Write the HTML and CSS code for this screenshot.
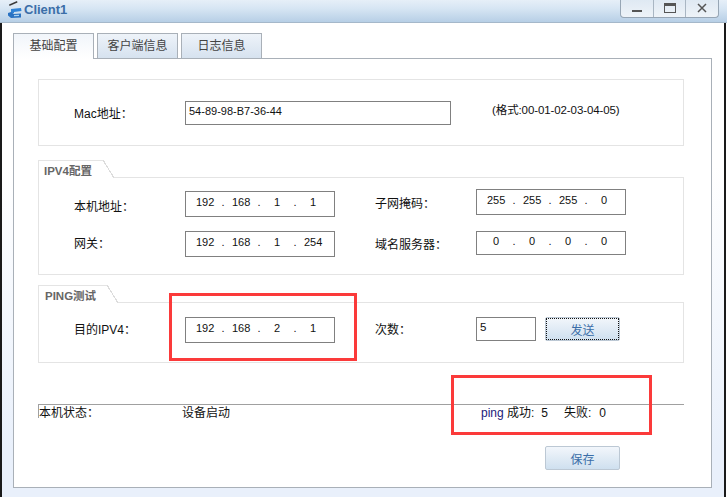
FILE: index.html
```html
<!DOCTYPE html>
<html>

<head>
  <meta charset="utf-8">
  <title>Client1</title>
  <link rel="stylesheet" href="styles.css">
</head>

<body>
  <div class="window">
    <div class="titlebar">
      <svg class="app-icon" width="16" height="19" viewBox="0 0 16 19">
        <path d="M3 4.5 L11 1 L11.5 2.5 L3.5 6 Z" fill="#3a3a3a" />
        <path d="M5 9 L15 8 L15.5 11 L8 12 L8 13 L5 13 Z" fill="#2f82d6" />
        <path d="M2 13 L5 12 L8 14 L15 13.5 L15 17.5 L5 18 L2 15.5 Z" fill="#2a72c2" />
        <path d="M8 15 L13 14.8 L13 16 L8 16.2 Z" fill="#a9d2f2" />
      </svg>
      <span class="title">Client1</span>
      <div class="controls">
        <div class="ctrl"><svg width="12" height="10" viewBox="0 0 12 10"><rect x="1" y="7" width="10" height="2" fill="#555" /></svg></div>
        <div class="ctrl"><svg width="12" height="10" viewBox="0 0 12 10"><rect x="0.5" y="0.5" width="11" height="9" fill="none" stroke="#555" /><rect x="0" y="0" width="12" height="3" fill="#555" /></svg></div>
        <div class="ctrl"><svg width="10" height="10" viewBox="0 0 10 10"><path d="M1 1 L9 9 M9 1 L1 9" stroke="#555" stroke-width="1.5" /></svg></div>
      </div>
    </div>

    <div class="content">
      <div class="tabs">
        <div class="tab active">基础配置</div>
        <div class="tab">客户端信息</div>
        <div class="tab">日志信息</div>
      </div>

      <div class="panel">
        <div class="mac-box">
          <label class="label mac-label">Mac地址：</label>
          <div class="mac-input">54-89-98-B7-36-44</div>
          <span class="hint">(格式:00-01-02-03-04-05)</span>
        </div>

        <div class="group">
          <div class="group-head">
            <div class="group-tab">IPV4配置</div>
            <div class="group-rule"></div>
          </div>
          <div class="group-body ipv4-body">
            <div class="col col-left">
              <div class="row">
                <label class="label label-low">本机地址：</label>
                <div class="ip-field"><span>192</span><span>.</span><span>168</span><span>.</span><span>1</span><span>.</span><span>1</span></div>
              </div>
              <div class="row">
                <label class="label label-high">网关：</label>
                <div class="ip-field"><span>192</span><span>.</span><span>168</span><span>.</span><span>1</span><span>.</span><span>254</span></div>
              </div>
            </div>
            <div class="col col-right">
              <div class="row">
                <label class="label">子网掩码：</label>
                <div class="ip-field"><span>255</span><span>.</span><span>255</span><span>.</span><span>255</span><span>.</span><span>0</span></div>
              </div>
              <div class="row">
                <label class="label">域名服务器：</label>
                <div class="ip-field short"><span>0</span><span>.</span><span>0</span><span>.</span><span>0</span><span>.</span><span>0</span></div>
              </div>
            </div>
          </div>
        </div>

        <div class="group ping-group">
          <div class="group-head">
            <div class="group-tab">PING测试</div>
            <div class="group-rule"></div>
          </div>
          <div class="group-body ping-body">
            <div class="row">
              <label class="label label-high">目的IPV4：</label>
              <div class="ip-field"><span>192</span><span>.</span><span>168</span><span>.</span><span>2</span><span>.</span><span>1</span></div>
            </div>
            <div class="row count-row">
              <label class="label label-mid">次数：</label>
              <div class="count-input">5</div>
              <button class="btn focused">发送</button>
            </div>
          </div>
        </div>

        <div class="status">
          <span class="status-name">本机状态：</span>
          <span class="status-value">设备启动</span>
          <span class="status-ping"><span class="ping-word">ping</span> 成功:<span class="ping-num">5</span></span>
          <span class="status-fail">失败:<span class="fail-num">0</span></span>
        </div>

        <div class="save-row">
          <button class="btn">保存</button>
        </div>
      </div>
    </div>

    <!-- marks drawn over the screenshot -->
    <div class="mark mark-ip"></div>
    <div class="mark mark-result"></div>
  </div>
</body>

</html>
```

FILE: styles.css
```css
* {
  box-sizing: border-box;
}

html,
body {
  margin: 0;
  padding: 0;
}

body {
  width: 727px;
  height: 497px;
  overflow: hidden;
  font-family: "Liberation Sans", "Noto Sans CJK SC", sans-serif;
  font-size: 12px;
  color: #111;
}

.window {
  position: relative;
  width: 727px;
  height: 497px;
  display: flex;
  flex-direction: column;
  background-color: #fff;
}

.titlebar {
  height: 23px;
  display: flex;
  align-items: flex-start;
  padding-left: 6px;
  background: linear-gradient(#e6eff8, #d6e5f3 40%, #b7cfe6);
  border-bottom: 1px solid #a5b8ca;
}

.title {
  margin-top: 2px;
  margin-left: 2px;
  font-size: 13px;
  font-weight: bold;
  color: #3b6ea8;
  line-height: 16px;
}

.controls {
  display: flex;
  margin-left: auto;
  margin-right: 8px;
  width: 99px;
  height: 18px;
  border: 1px solid #97a6b5;
  border-top: none;
  border-radius: 0 0 4px 4px;
  background: linear-gradient(#dfe9f3, #eef3f8);
}

.ctrl {
  flex: 1;
  display: flex;
  align-items: center;
  justify-content: center;
  padding-bottom: 1px;
  border-left: 1px solid #a9b6c3;
}

.ctrl:first-child {
  border-left: none;
}

.content {
  flex: 1;
  display: flex;
  flex-direction: column;
  padding: 10px 12px 9px 11px;
  margin-right: 1px;
  background: linear-gradient(#ffffff, #ffffff 30%, #e9f0fb 90%);
  border-left: 2px solid #1a1a1a;
  border-right: 2px solid #1a1a1a;
}

.tabs {
  display: flex;
  gap: 3px;
  height: 25px;
}

.tab {
  width: 81px;
  height: 25px;
  text-align: center;
  line-height: 25px;
  color: #444;
  background: linear-gradient(#eef3f9, #d6e2ef);
  border: 1px solid #a9b0b8;
  border-bottom: none;
}

.tab.active {
  background: linear-gradient(#f1f5fa, #ffffff);
  height: 26px;
  position: relative;
  z-index: 1;
}

.panel {
  flex: 1;
  background-color: #fff;
  border: 1px solid #a9b0b8;
  padding: 20px 27px 0 24px;
}

.mac-box {
  height: 67px;
  display: flex;
  align-items: flex-start;
  padding: 21px 0 0 35px;
  border: 1px solid #e4e4e4;
}

.label {
  display: block;
  width: 111px;
  line-height: 16px;
  color: #111;
}

.mac-label {
  padding-top: 5px;
}

.mac-input {
  width: 266px;
  height: 24px;
  padding-left: 3px;
  line-height: 19px;
  font-size: 11px;
  border: 1px solid #808080;
}

.hint {
  margin-left: 41px;
  margin-top: 1px;
  line-height: 16px;
  font-size: 11.5px;
  letter-spacing: -0.1px;
}

.group {
  margin-top: 14px;
}

.group-head {
  display: flex;
  height: 18px;
}

.group-tab {
  position: relative;
  width: 65px;
  padding: 3px 0 0 5px;
  font-size: 11.5px;
  line-height: 15px;
  font-weight: bold;
  color: #666;
  border-top: 1px solid #e4e4e4;
  border-left: 1px solid #e4e4e4;
}

.ping-group .group-tab {
  width: 69px;
  padding-left: 6px;
}

/* slanted right edge of the group tab */
.group-tab::after {
  content: "";
  position: absolute;
  top: -1px;
  right: -11px;
  width: 11px;
  height: 18px;
  background: linear-gradient(to top right, transparent 47%, #dcdcdc 47%, #dcdcdc 53%, transparent 53%);
}

.group-rule {
  flex: 1;
  border-bottom: 1px solid #e4e4e4;
  margin-left: 11px;
}

.group-body {
  display: flex;
  padding-left: 35px;
  border: 1px solid #e4e4e4;
  border-top: none;
}

.ipv4-body {
  height: 97px;
}

.col {
  display: flex;
  flex-direction: column;
}

.col-left {
  width: 301px;
  padding-top: 13px;
  gap: 14px;
}

.col-right {
  padding-top: 11px;
  gap: 16px;
}

.col-right .label {
  width: 101px;
}

.row {
  display: flex;
  align-items: center;
}

.row .label {
  padding-top: 4px;
}

.row .label-low {
  padding-top: 6px;
}

.row .label-mid {
  padding-top: 2px;
}

.row .label-high {
  padding-top: 0;
}

.ip-field {
  width: 150px;
  height: 26px;
  display: grid;
  grid-template-columns: repeat(7, 18px);
  padding: 2px 0 0 10px;
  line-height: 16px;
  font-size: 11px;
  text-align: center;
  border: 1px solid #808080;
}

.ip-field.short {
  height: 24px;
  padding-top: 1px;
}

.ping-group {
  margin-top: 10px;
}

.ping-body {
  height: 60px;
  padding-top: 14px;
  align-items: flex-start;
}

.ping-body .row {
  width: 301px;
}

.count-row .label {
  width: 101px;
}

.count-input {
  width: 60px;
  height: 24px;
  padding-left: 3px;
  line-height: 19px;
  font-size: 11.5px;
  border: 1px solid #808080;
}

.btn {
  width: 75px;
  height: 24px;
  padding: 0;
  font-family: inherit;
  font-size: 12px;
  color: #3b6ea8;
  background: linear-gradient(#f2f6fb, #cfe0ef);
  border: 1px solid #bcc8d4;
  border-radius: 2px;
}

.btn.focused {
  margin-left: 9px;
  outline: 1px dotted #111;
  outline-offset: -2px;
}

.status {
  display: flex;
  margin-top: 41px;
  height: 14px;
  padding-top: 1px;
  line-height: 14px;
  border-top: 1px solid #a0a0a0;
  border-left: 1px solid #a0a0a0;
}

.status-name {
  width: 143px;
}

.status-value {
  width: 299px;
}

.ping-word {
  color: #1a1a7a;
}

.ping-num {
  margin-left: 7px;
}

.status-ping {
  width: 83px;
}

.fail-num {
  margin-left: 8px;
}

.save-row {
  display: flex;
  padding-left: 507px;
  margin-top: 28px;
}

.mark {
  position: absolute;
  border: 3px solid #fb3a3a;
}

.mark-ip {
  left: 169px;
  top: 293px;
  width: 188px;
  height: 68px;
}

.mark-result {
  left: 451px;
  top: 375px;
  width: 201px;
  height: 60px;
}
```
